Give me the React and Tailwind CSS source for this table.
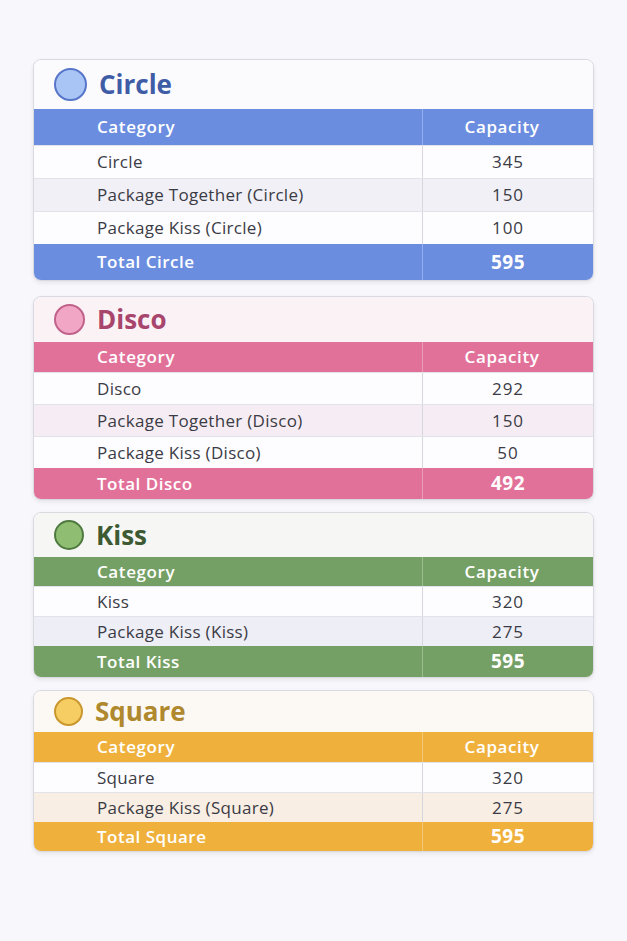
const sections = [
    {
        name: "Circle",
        title: "text-[#3f5ca6]",
        titleBg: "bg-[#fbfbfe]",
        dot: "bg-[#a9c5f6] border-[#5876c9]",
        head: "bg-[#6b8de0]",
        divHead: "border-[#94aef0]",
        alt: "bg-[#f0f0f6]",
        sizes: { title: "h-[49px]", dot: "w-[33px] h-[33px]", head: "h-[36px]", row: "h-[33px]", total: "h-[36px]" },
        rows: [["Circle", 345], ["Package Together (Circle)", 150], ["Package Kiss (Circle)", 100]],
        total: 595,
        mt: "",
    },
    {
        name: "Disco",
        title: "text-[#a8456c]",
        titleBg: "bg-[#fbf2f6]",
        dot: "bg-[#f2a6c6] border-[#c0628a]",
        head: "bg-[#e2719a]",
        divHead: "border-[#eb9ab7]",
        alt: "bg-[#f6edf4]",
        sizes: { title: "h-[45px]", dot: "w-[31px] h-[31px]", head: "h-[30px]", row: "h-[32px]", total: "h-[31px]" },
        rows: [["Disco", 292], ["Package Together (Disco)", 150], ["Package Kiss (Disco)", 50]],
        total: 492,
        mt: "mt-[15px]",
    },
    {
        name: "Kiss",
        title: "text-[#3d5a33]",
        titleBg: "bg-[#f6f7f5]",
        dot: "bg-[#8fbe72] border-[#4f7a3f]",
        head: "bg-[#75a065]",
        divHead: "border-[#9cbd8e]",
        alt: "bg-[#eeeef6]",
        sizes: { title: "h-[44px]", dot: "w-[30px] h-[30px]", head: "h-[29px]", row: "h-[30px]", total: "h-[31px]" },
        rows: [["Kiss", 320], ["Package Kiss (Kiss)", 275]],
        total: 595,
        mt: "mt-[12px]",
    },
    {
        name: "Square",
        title: "text-[#b0882e]",
        titleBg: "bg-[#fcf9f4]",
        dot: "bg-[#f6cd62] border-[#c9972e]",
        head: "bg-[#efb13c]",
        divHead: "border-[#f5ca76]",
        alt: "bg-[#f8eee3]",
        sizes: { title: "h-[41px]", dot: "w-[29px] h-[29px]", head: "h-[30px]", row: "h-[30px]", total: "h-[29px]" },
        rows: [["Square", 320], ["Package Kiss (Square)", 275]],
        total: 595,
        mt: "mt-[12px]",
    },
];

function Card({ s }) {
    const z = s.sizes;
    return (
        <div className={`${s.mt} rounded-[8px] border border-[#d9d9e2] bg-white overflow-hidden shadow-[0_2px_4px_rgba(0,0,0,0.08)]`}>
            <div className={`${z.title} ${s.titleBg} flex items-center pl-[20px] gap-[12px]`}>
                <div className={`${z.dot} ${s.dot} rounded-full border-2`}></div>
                <span className={`${s.title} text-[26px] font-bold`}>{s.name}</span>
            </div>
            <div className={`${z.head} ${s.head} flex text-white font-semibold text-[17px] tracking-[0.6px]`}>
                <div className="flex-1 flex items-center pl-[63px]">Category</div>
                <div className={`w-[171px] flex items-center justify-center pr-[12px] border-l ${s.divHead}`}>Capacity</div>
            </div>
            {s.rows.map((r, i) => (
                <div key={r[0]} className={`${z.row} flex text-[17px] tracking-[0.3px] text-[#3b3b45] border-t border-[#e2e2ea] ${i % 2 === 1 ? s.alt : "bg-[#fdfdff]"}`}>
                    <div className="flex-1 flex items-center pl-[63px]">{r[0]}</div>
                    <div className="w-[171px] flex items-center justify-center border-l border-[#d6d6de] tracking-[1px]">{r[1]}</div>
                </div>
            ))}
            <div className={`${z.total} ${s.head} flex text-white font-semibold text-[17px] tracking-[0.5px]`}>
                <div className="flex-1 flex items-center pl-[63px]">Total {s.name}</div>
                <div className={`w-[171px] flex items-center justify-center border-l ${s.divHead} text-[19px] font-bold`}>{s.total}</div>
            </div>
        </div>
    );
}

export default function App() {
    return (
        <div className="h-screen w-full bg-[#f8f7fb] px-[33px] pt-[59px] font-['Open_Sans',sans-serif]">
            {sections.map((s) => (
                <Card key={s.name} s={s} />
            ))}
        </div>
    );
}
